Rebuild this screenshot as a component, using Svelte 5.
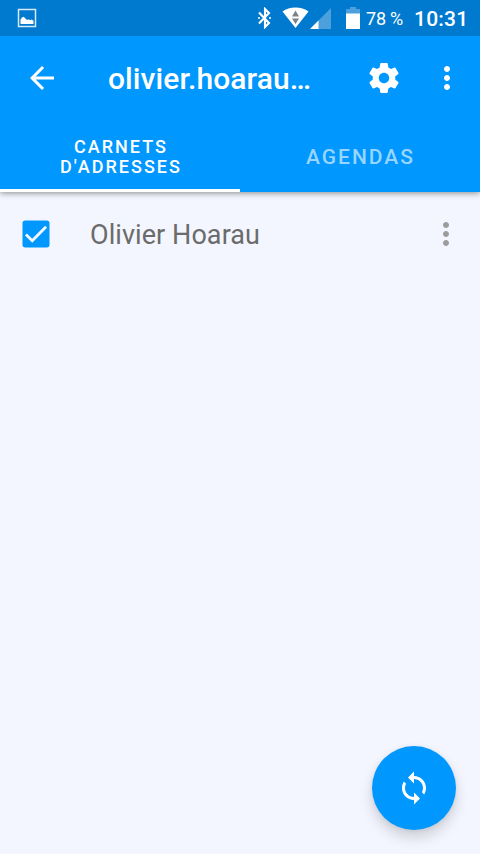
<script lang="ts">
	type Tab = {
		id: string;
		label: string;
		small?: boolean;
	};

	const tabs: Tab[] = [
		{ id: 'contacts', label: "Carnets d'adresses", small: true },
		{ id: 'calendars', label: 'Agendas' }
	];

	let active = $state('contacts');
	let collections = $state([{ name: 'Olivier Hoarau', sync: true }]);
</script>

{#snippet more()}
	<svg class="icon" viewBox="0 0 24 24">
		<path
			d="M12 8c1.1 0 2-.9 2-2s-.9-2-2-2-2 .9-2 2 .9 2 2 2zm0 2c-1.1 0-2 .9-2 2s.9 2 2 2 2-.9 2-2-.9-2-2-2zm0 6c-1.1 0-2 .9-2 2s.9 2 2 2 2-.9 2-2-.9-2-2-2z"
		/>
	</svg>
{/snippet}

<div class="screen">
	<div class="status">
		<svg class="picture" width="20" height="20" viewBox="0 0 20 20">
			<rect x="1.5" y="1.5" width="17" height="17" fill="none" stroke="#d5e9f8" stroke-width="1.5" />
			<path d="M3.5 16v-4.500l1.500-2 1.500-.8 2 1.800 1.500 1.500 1.500-.8 1.500 1 1.500-.8 2 1.300V16z" />
		</svg>
		<svg class="bluetooth" width="15" height="22" viewBox="0 0 15 22">
			<path
				d="M2 5.500 12 16 8 20V2L12 6 2 16.500"
				fill="none"
				stroke="#fff"
				stroke-width="2.1"
			/>
			<circle cx="2" cy="11" r="1" />
			<circle cx="13" cy="11" r="1" />
		</svg>
		<svg class="wifi" width="27" height="22" viewBox="0 0 27 22">
			<path d="M.5 4.500C4 2 8.500.5 13.500.5S23 2 26.500 4.500L13.500 21z" />
			<path d="M13.500 3.500l3.500 6H10zM10 11.500h7l-3.500 5.500z" fill="#7c8388" />
		</svg>
		<svg class="signal" width="21" height="21" viewBox="0 0 21 21">
			<path d="M21 0v21H0z" fill="#4ca1dc" />
			<path d="M8.500 12.500V21H0z" />
		</svg>
		<svg class="battery" width="14" height="22" viewBox="0 0 14 22">
			<path d="M4 0h6v2h4v5H0V2h4z" fill="#4ca1dc" />
			<path d="M0 6.500h14V22H0z" />
		</svg>
		<span class="level">78 %</span>
		<span class="clock">10:31</span>
	</div>

	<header>
		<div class="toolbar">
			<button class="back" aria-label="Retour">
				<svg class="icon" viewBox="0 0 24 24">
					<path d="M20 11H7.830l5.590-5.590L12 4l-8 8 8 8 1.410-1.410L7.830 13H20v-2z" />
				</svg>
			</button>
			<h1>olivier.hoarau…</h1>
			<button class="settings" aria-label="Paramètres">
				<svg class="icon" viewBox="0 0 24 24">
					<path
						d="M19.430 12.980c.04-.32.07-.64.07-.98s-.03-.66-.07-.98l2.110-1.650c.19-.15.24-.42.12-.64l-2-3.460c-.12-.22-.39-.3-.61-.22l-2.490 1c-.52-.4-1.080-.73-1.690-.98l-.38-2.650C14.460 2.180 14.250 2 14 2h-4c-.25 0-.46.18-.49.42l-.38 2.650c-.61.25-1.170.59-1.690.98l-2.490-1c-.23-.09-.49 0-.61.22l-2 3.460c-.13.22-.07.49.12.64l2.110 1.650c-.04.32-.07.65-.07.98s.03.66.07.98l-2.110 1.650c-.19.15-.24.42-.12.64l2 3.460c.12.22.39.3.61.22l2.490-1c.52.4 1.080.73 1.690.98l.38 2.650c.03.24.24.42.49.42h4c.25 0 .46-.18.49-.42l.38-2.650c.61-.25 1.170-.59 1.690-.98l2.490 1c.23.09.49 0 .61-.22l2-3.460c.12-.22.07-.49-.12-.64l-2.110-1.650zM12 15.500c-1.930 0-3.500-1.570-3.500-3.500s1.570-3.500 3.500-3.500 3.500 1.570 3.500 3.500-1.570 3.500-3.500 3.500z"
					/>
				</svg>
			</button>
			<button class="menu" aria-label="Plus d'options">{@render more()}</button>
		</div>

		<nav>
			{#each tabs as tab (tab.id)}
				<button
					class="tab"
					class:active={active === tab.id}
					class:small={tab.small}
					onclick={() => (active = tab.id)}
				>
					<span>{tab.label}</span>
				</button>
			{/each}
		</nav>
	</header>

	<main>
		{#if active === 'contacts'}
			{#each collections as item (item.name)}
				<div class="row">
					<button
						class="check"
						role="checkbox"
						aria-checked={item.sync}
						aria-label={item.name}
						onclick={() => (item.sync = !item.sync)}
					>
						<svg class="icon" viewBox="0 0 24 24">
							{#if item.sync}
								<rect x="3" y="3" width="18" height="18" rx="1.8" />
								<path class="tick" d="M5.300 12.300l4.200 4.200 9.200-9.400" />
							{:else}
								<path d="M19 5v14H5V5h14m0-2H5c-1.100 0-2 .9-2 2v14c0 1.100.9 2 2 2h14c1.100 0 2-.9 2-2V5c0-1.100-.9-2-2-2z" />
							{/if}
						</svg>
					</button>
					<span class="name">{item.name}</span>
					<button class="more" aria-label="Options">{@render more()}</button>
				</div>
			{/each}
		{/if}
	</main>

	<button class="fab" aria-label="Synchroniser">
		<svg class="icon" viewBox="0 0 24 24">
			<path
				d="M12 4V1L8 5l4 4V6c3.310 0 6 2.690 6 6 0 1.010-.25 1.970-.7 2.800l1.460 1.460C19.540 15.030 20 13.570 20 12c0-4.420-3.580-8-8-8zm0 14c-3.310 0-6-2.690-6-6 0-1.010.25-1.970.7-2.800L5.240 7.740C4.460 8.970 4 10.430 4 12c0 4.420 3.580 8 8 8v3l4-4-4-4v3z"
			/>
		</svg>
	</button>
</div>

<style>
	:global(body) {
		margin: 0;
	}

	.screen {
		position: relative;
		display: flex;
		flex-direction: column;
		height: 854px;
		overflow: hidden;
		background: #f3f6fe;
		font-family: Roboto, 'Noto Sans', sans-serif;
	}

	button {
		display: flex;
		align-items: center;
		justify-content: center;
		margin: 0;
		padding: 0;
		border: none;
		background: none;
		color: inherit;
		font: inherit;
		cursor: pointer;
	}

	svg {
		display: block;
		flex: none;
		fill: #fff;
	}

	.icon {
		width: 36px;
		height: 36px;
		fill: currentColor;
	}

	.status {
		display: flex;
		align-items: center;
		box-sizing: border-box;
		height: 36px;
		padding: 0 12px 0 17px;
		background: #007acf;
		color: #fff;
		white-space: nowrap;

		.bluetooth {
			margin-left: auto;
		}

		.wifi {
			margin-left: 10px;
		}

		.signal {
			margin-left: 1px;
		}

		.battery {
			margin-left: 15px;
		}

		.level {
			width: 42px;
			margin-left: 6px;
			padding-top: 1px;
			font-size: 18px;
			letter-spacing: -0.2px;
		}

		.clock {
			width: 54px;
			margin-left: 6px;
			padding-top: 2px;
			font-size: 21px;
			font-weight: 500;
			letter-spacing: 0.2px;
		}
	}

	header {
		z-index: 1;
		background: #0097ff;
		color: #fff;
		box-shadow: 0 1px 6px rgba(0, 0, 0, 0.45);
		/* keep the shadow off the status bar */
		clip-path: inset(0 0 -12px);
	}

	.toolbar {
		display: flex;
		align-items: center;
		height: 84px;
		padding: 0 15px 0 24px;

		h1 {
			flex: 1;
			margin: 0 0 0 48px;
			padding-top: 2px;
			font-size: 30px;
			font-weight: 500;
			line-height: 36px;
			letter-spacing: 0.08px;
			white-space: nowrap;
		}

		.menu {
			margin-left: 27px;
		}
	}

	nav {
		display: grid;
		grid-template-columns: 1fr 1fr;
		height: 72px;
	}

	.tab {
		box-sizing: border-box;
		padding: 5px 0 0 1px;
		border-bottom: 3px solid transparent;
		color: #99d5ff;
		font-size: 21px;
		font-weight: 500;
		letter-spacing: 2px;
		text-transform: uppercase;

		&.active {
			border-color: #fff;
			color: #fff;
		}

		&.small {
			padding-left: 2px;
			font-size: 18px;
			line-height: 20px;

			span {
				width: 150px;
			}
		}
	}

	main {
		flex: 1;
	}

	.row {
		display: flex;
		align-items: center;
		height: 84px;
		padding: 0 16px 0 18px;

		.check {
			color: #0097ff;
		}

		.tick {
			fill: none;
			stroke: #f3f6fe;
			stroke-width: 1.9;
		}

		.name {
			flex: 1;
			margin-left: 36px;
			padding-top: 2px;
			color: #6b6b6b;
			font-size: 27px;
			letter-spacing: 0.07px;
		}

		.more {
			color: #9c9c9c;
		}
	}

	.fab {
		position: absolute;
		right: 24px;
		bottom: 24px;
		width: 84px;
		height: 84px;
		border-radius: 50%;
		background: #0097ff;
		color: #fff;
		box-shadow:
			0 8px 14px rgba(0, 0, 0, 0.15),
			0 1px 5px rgba(0, 0, 0, 0.08);
	}
</style>
